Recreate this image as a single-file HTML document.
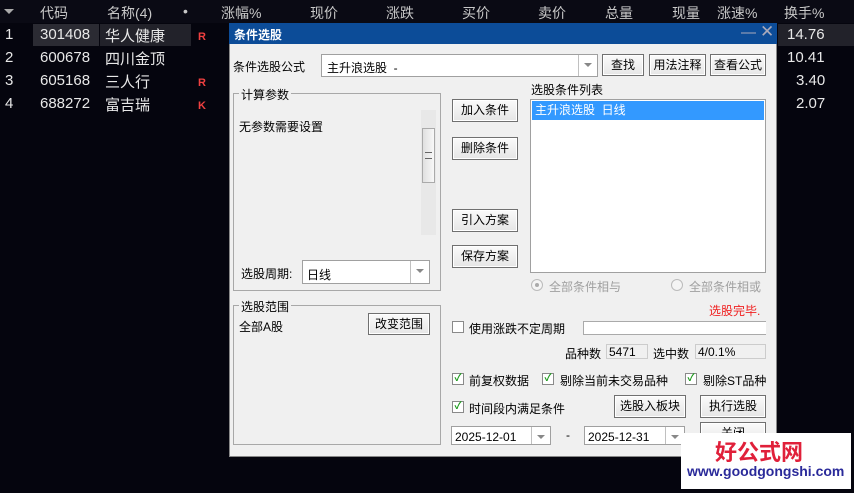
<html><head><style>
body{margin:0;width:854px;height:493px;background:#05050e;position:relative;overflow:hidden;font-family:"Liberation Sans","Noto Sans CJK SC",sans-serif}
.a{position:absolute;white-space:nowrap}
.h{color:#c8c8c8;font-size:14px;top:3px}
.r{color:#e8e8e8;font-size:15px}
.d{font-size:12px;color:#000}
.btn{position:absolute;background:linear-gradient(#fbfbfb,#e6e6e6);border:1px solid #707070;box-shadow:inset 0 0 0 1px #fff;font-size:12px;text-align:center;box-sizing:border-box;color:#000}
.box{position:absolute;background:#fff;border:1px solid #a0a0a0;box-sizing:border-box}
.grp{position:absolute;border:1px solid #a8a8a8;box-sizing:border-box}
.gl{position:absolute;background:#f0f0f0;font-size:12px;padding:0 2px;top:-8px;left:5px}
.dd{position:absolute;right:0;top:0;bottom:0;width:18px;border-left:1px solid #c0c0c0}
.dd:after{content:"";position:absolute;left:5px;top:8px;border:4px solid transparent;border-top:4px solid #888}
.cb{position:absolute;width:12px;height:12px;border:1px solid #8a8a8a;background:#fff;box-sizing:border-box;color:#1a9a1a;font-size:10px;line-height:10px;text-align:center;font-weight:bold}
</style></head><body>
<div class="a" style="left:0;top:0;width:854px;height:23px;background:#0a0a14"></div>
<div class="a" style="left:4px;top:9px;border:5px solid transparent;border-top:5px solid #aaa"></div>
<div class="a h" style="left:40px">代码</div>
<div class="a h" style="left:107px">名称(4)</div>
<div class="a h" style="left:183px">•</div>
<div class="a h" style="left:221px">涨幅%</div>
<div class="a h" style="left:310px">现价</div>
<div class="a h" style="left:386px">涨跌</div>
<div class="a h" style="left:462px">买价</div>
<div class="a h" style="left:538px">卖价</div>
<div class="a h" style="left:605px">总量</div>
<div class="a h" style="left:672px">现量</div>
<div class="a h" style="left:717px">涨速%</div>
<div class="a h" style="left:784px">换手%</div>
<div class="a" style="left:33px;top:24px;width:66px;height:22px;background:#2b2b33"></div>
<div class="a" style="left:100px;top:24px;width:91px;height:22px;background:#22222a"></div>
<div class="a" style="left:778px;top:24px;width:76px;height:22px;background:#22222a"></div>
<div class="a r" style="left:5px;top:26px">1</div><div class="a r" style="left:40px;top:26px">301408</div><div class="a r" style="left:105px;top:25px">华人健康</div><div class="a" style="left:198px;top:31px;color:#f04040;font-size:11px;font-weight:bold">R</div>
<div class="a r" style="left:5px;top:49px">2</div><div class="a r" style="left:40px;top:49px">600678</div><div class="a r" style="left:105px;top:48px">四川金顶</div>
<div class="a r" style="left:5px;top:72px">3</div><div class="a r" style="left:40px;top:72px">605168</div><div class="a r" style="left:105px;top:71px">三人行</div><div class="a" style="left:198px;top:77px;color:#f04040;font-size:11px;font-weight:bold">R</div>
<div class="a r" style="left:5px;top:95px">4</div><div class="a r" style="left:40px;top:95px">688272</div><div class="a r" style="left:105px;top:94px">富吉瑞</div><div class="a" style="left:198px;top:100px;color:#f04040;font-size:11px;font-weight:bold">K</div>
<div class="a r" style="left:787px;top:26px">14.76</div>
<div class="a r" style="left:787px;top:49px">10.41</div>
<div class="a r" style="left:796px;top:72px">3.40</div>
<div class="a r" style="left:796px;top:95px">2.07</div>

<div class="a" style="left:229px;top:23px;width:548px;height:434px;background:#f0f0f0;border:1px solid #888;box-sizing:border-box"></div>
<div class="a" style="left:229px;top:23px;width:548px;height:21px;background:#0c4c98"></div>
<div class="a" style="left:234px;top:26px;color:#fff;font-size:12px;font-weight:bold">条件选股</div>
<div class="a" style="left:741px;top:24px;color:#aab;font-size:15px">—</div>
<div class="a" style="left:760px;top:22px;color:#aab;font-size:17px">✕</div>

<div class="a d" style="left:233px;top:58px">条件选股公式</div>
<div class="box" style="left:321px;top:54px;width:277px;height:23px"><span class="a d" style="left:5px;top:4px">主升浪选股 &nbsp;-</span><div class="dd"></div></div>
<div class="btn" style="left:602px;top:54px;width:42px;height:22px;line-height:20px">查找</div>
<div class="btn" style="left:649px;top:54px;width:57px;height:22px;line-height:20px">用法注释</div>
<div class="btn" style="left:710px;top:54px;width:56px;height:22px;line-height:20px">查看公式</div>

<div class="grp" style="left:233px;top:93px;width:208px;height:198px"><div class="gl">计算参数</div></div>
<div class="a d" style="left:239px;top:118px">无参数需要设置</div>
<div class="a" style="left:421px;top:110px;width:15px;height:125px;background:#e8e8e8"></div>
<div class="a" style="left:422px;top:128px;width:13px;height:55px;background:linear-gradient(90deg,#e0e0e0,#f8f8f8);border:1px solid #aaa;box-sizing:border-box"></div>
<div class="a" style="left:425px;top:152px;width:7px;height:5px;border-top:1px solid #666;border-bottom:1px solid #666"></div>
<div class="a d" style="left:241px;top:265px">选股周期:</div>
<div class="box" style="left:302px;top:260px;width:128px;height:24px"><span class="a d" style="left:4px;top:5px">日线</span><div class="dd"></div></div>

<div class="btn" style="left:452px;top:99px;width:66px;height:23px;line-height:21px">加入条件</div>
<div class="btn" style="left:452px;top:137px;width:66px;height:23px;line-height:21px">删除条件</div>
<div class="btn" style="left:452px;top:209px;width:66px;height:23px;line-height:21px">引入方案</div>
<div class="btn" style="left:452px;top:245px;width:66px;height:23px;line-height:21px">保存方案</div>

<div class="a d" style="left:531px;top:81px">选股条件列表</div>
<div class="box" style="left:530px;top:99px;width:236px;height:174px"></div>
<div class="a" style="left:532px;top:101px;width:232px;height:19px;background:#3399ff;color:#fff;font-size:12px;line-height:19px;padding-left:3px;box-sizing:border-box">主升浪选股 &nbsp;日线</div>
<div class="a" style="left:531px;top:279px;width:10px;height:10px;border:1px solid #bbb;border-radius:50%;background:#f4f4f4"></div><div class="a" style="left:535px;top:283px;width:4px;height:4px;border-radius:50%;background:#aaa"></div>
<div class="a" style="left:549px;top:278px;font-size:12px;color:#a0a0a0">全部条件相与</div>
<div class="a" style="left:671px;top:279px;width:10px;height:10px;border:1px solid #bbb;border-radius:50%;background:#f4f4f4"></div>
<div class="a" style="left:689px;top:278px;font-size:12px;color:#a0a0a0">全部条件相或</div>
<div class="a" style="left:709px;top:302px;font-size:12px;color:#f02020">选股完毕.</div>

<div class="grp" style="left:233px;top:305px;width:208px;height:140px"><div class="gl">选股范围</div></div>
<div class="a d" style="left:239px;top:318px">全部A股</div>
<div class="btn" style="left:368px;top:313px;width:62px;height:22px;line-height:20px">改变范围</div>

<div class="cb" style="left:452px;top:321px"></div><div class="a d" style="left:469px;top:320px">使用涨跌不定周期</div>
<div class="a" style="left:583px;top:321px;width:183px;height:14px;background:#fff;border:1px solid #aaa;border-right:none;box-sizing:border-box"></div>
<div class="a d" style="left:565px;top:345px">品种数</div>
<div class="a" style="left:606px;top:344px;width:42px;height:15px;background:#f0f0f0;border:1px solid #ccc;font-size:12px;line-height:14px;padding-left:2px;box-sizing:border-box">5471</div>
<div class="a d" style="left:653px;top:345px">选中数</div>
<div class="a" style="left:695px;top:344px;width:71px;height:15px;background:#f0f0f0;border:1px solid #ccc;font-size:12px;line-height:14px;padding-left:2px;box-sizing:border-box">4/0.1%</div>

<div class="cb" style="left:452px;top:373px">✓</div><div class="a d" style="left:469px;top:372px">前复权数据</div>
<div class="cb" style="left:542px;top:373px">✓</div><div class="a d" style="left:560px;top:372px">剔除当前未交易品种</div>
<div class="cb" style="left:685px;top:373px">✓</div><div class="a d" style="left:703px;top:372px">剔除ST品种</div>
<div class="cb" style="left:452px;top:401px">✓</div><div class="a d" style="left:469px;top:400px">时间段内满足条件</div>
<div class="btn" style="left:614px;top:395px;width:72px;height:23px;line-height:21px">选股入板块</div>
<div class="btn" style="left:700px;top:395px;width:66px;height:23px;line-height:21px">执行选股</div>
<div class="box" style="left:451px;top:426px;width:100px;height:19px"><span class="a d" style="left:3px;top:3px">2025-12-01</span><div class="dd"></div></div>
<div class="a d" style="left:566px;top:428px">-</div>
<div class="box" style="left:584px;top:426px;width:101px;height:19px"><span class="a d" style="left:3px;top:3px">2025-12-31</span><div class="dd"></div></div>
<div class="btn" style="left:700px;top:422px;width:66px;height:23px;line-height:21px">关闭</div>

<div class="a" style="left:681px;top:433px;width:170px;height:56px;background:#fff"></div>
<div class="a" style="left:715px;top:435px;color:#e0203a;font-size:22px;font-weight:bold">好公式网</div>
<div class="a" style="left:687px;top:463px;color:#2a2a9a;font-size:14px;font-weight:bold">www.goodgongshi.com</div>
</body></html>
